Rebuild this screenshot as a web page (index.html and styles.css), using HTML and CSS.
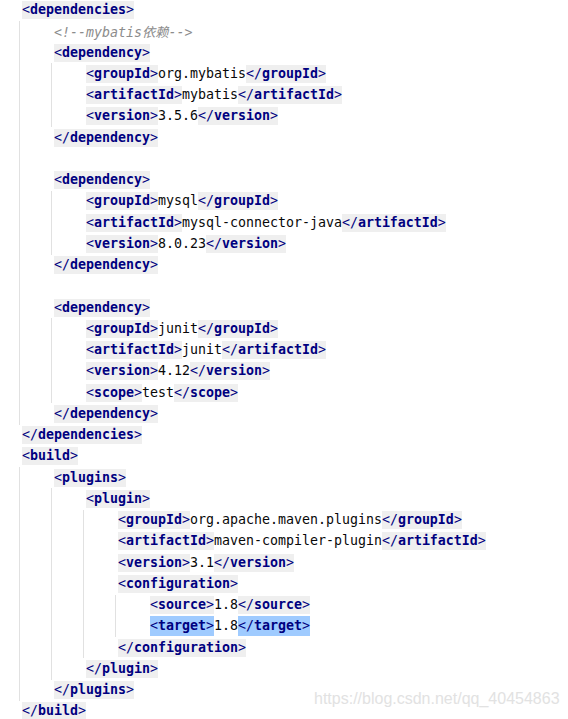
FILE: index.html
```html
<!DOCTYPE html>
<html lang="zh">
<head>
<meta charset="utf-8">
<title>pom.xml</title>
<link rel="stylesheet" href="styles.css">
</head>
<body>
<div class="editor">
  <div class="code">
    <div class="ln"><span class="tag">&lt;<b>dependencies</b>&gt;</span></div>
    <div class="body">
      <div class="ln"><span class="cmt">&lt;!--mybatis依赖--&gt;</span></div>
      <div class="ln"><span class="tag">&lt;<b>dependency</b>&gt;</span></div>
      <div class="body">
        <div class="ln"><span class="tag">&lt;<b>groupId</b>&gt;</span><span class="txt">org.mybatis</span><span class="tag">&lt;/<b>groupId</b>&gt;</span></div>
        <div class="ln"><span class="tag">&lt;<b>artifactId</b>&gt;</span><span class="txt">mybatis</span><span class="tag">&lt;/<b>artifactId</b>&gt;</span></div>
        <div class="ln"><span class="tag">&lt;<b>version</b>&gt;</span><span class="txt">3.5.6</span><span class="tag">&lt;/<b>version</b>&gt;</span></div>
      </div>
      <div class="ln"><span class="tag">&lt;/<b>dependency</b>&gt;</span></div>
      <div class="ln"></div>
      <div class="ln"><span class="tag">&lt;<b>dependency</b>&gt;</span></div>
      <div class="body">
        <div class="ln"><span class="tag">&lt;<b>groupId</b>&gt;</span><span class="txt">mysql</span><span class="tag">&lt;/<b>groupId</b>&gt;</span></div>
        <div class="ln"><span class="tag">&lt;<b>artifactId</b>&gt;</span><span class="txt">mysql-connector-java</span><span class="tag">&lt;/<b>artifactId</b>&gt;</span></div>
        <div class="ln"><span class="tag">&lt;<b>version</b>&gt;</span><span class="txt">8.0.23</span><span class="tag">&lt;/<b>version</b>&gt;</span></div>
      </div>
      <div class="ln"><span class="tag">&lt;/<b>dependency</b>&gt;</span></div>
      <div class="ln"></div>
      <div class="ln"><span class="tag">&lt;<b>dependency</b>&gt;</span></div>
      <div class="body">
        <div class="ln"><span class="tag">&lt;<b>groupId</b>&gt;</span><span class="txt">junit</span><span class="tag">&lt;/<b>groupId</b>&gt;</span></div>
        <div class="ln"><span class="tag">&lt;<b>artifactId</b>&gt;</span><span class="txt">junit</span><span class="tag">&lt;/<b>artifactId</b>&gt;</span></div>
        <div class="ln"><span class="tag">&lt;<b>version</b>&gt;</span><span class="txt">4.12</span><span class="tag">&lt;/<b>version</b>&gt;</span></div>
        <div class="ln"><span class="tag">&lt;<b>scope</b>&gt;</span><span class="txt">test</span><span class="tag">&lt;/<b>scope</b>&gt;</span></div>
      </div>
      <div class="ln"><span class="tag">&lt;/<b>dependency</b>&gt;</span></div>
    </div>
    <div class="ln"><span class="tag">&lt;/<b>dependencies</b>&gt;</span></div>
    <div class="ln"><span class="tag">&lt;<b>build</b>&gt;</span></div>
    <div class="body">
      <div class="ln"><span class="tag">&lt;<b>plugins</b>&gt;</span></div>
      <div class="body">
        <div class="ln"><span class="tag">&lt;<b>plugin</b>&gt;</span></div>
        <div class="body">
          <div class="ln"><span class="tag">&lt;<b>groupId</b>&gt;</span><span class="txt">org.apache.maven.plugins</span><span class="tag">&lt;/<b>groupId</b>&gt;</span></div>
          <div class="ln"><span class="tag">&lt;<b>artifactId</b>&gt;</span><span class="txt">maven-compiler-plugin</span><span class="tag">&lt;/<b>artifactId</b>&gt;</span></div>
          <div class="ln"><span class="tag">&lt;<b>version</b>&gt;</span><span class="txt">3.1</span><span class="tag">&lt;/<b>version</b>&gt;</span></div>
          <div class="ln"><span class="tag">&lt;<b>configuration</b>&gt;</span></div>
          <div class="body">
            <div class="ln"><span class="tag">&lt;<b>source</b>&gt;</span><span class="txt">1.8</span><span class="tag">&lt;/<b>source</b>&gt;</span></div>
            <div class="ln current"><span class="tag match">&lt;<b>target</b>&gt;</span><span class="txt">1.8</span><span class="tag match">&lt;/<b>target</b>&gt;</span></div>
          </div>
          <div class="ln"><span class="tag">&lt;/<b>configuration</b>&gt;</span></div>
        </div>
        <div class="ln"><span class="tag">&lt;/<b>plugin</b>&gt;</span></div>
      </div>
      <div class="ln"><span class="tag">&lt;/<b>plugins</b>&gt;</span></div>
    </div>
    <div class="ln"><span class="tag">&lt;/<b>build</b>&gt;</span></div>
  </div>
  <div class="watermark">https://blog.csdn.net/qq_40454863</div>
</div>
</body>
</html>
```

FILE: styles.css
```css
html, body {
  margin: 0;
  padding: 0;
  background: #ffffff;
  overflow: hidden;
}

.editor {
  width: 568px;
  height: 719px;
  overflow: hidden;
}

.code {
  margin-top: -0.5px;
  padding-left: 22px;
  font-family: "DejaVu Sans Mono", "Noto Sans CJK SC", monospace;
  font-size: 13.29px;
  color: #080808;
}

.body {
  margin-left: -3px;
  border-left: 1px solid #e1e1e1;
  padding-left: 34px;
}

.ln {
  display: flex;
  align-items: center;
  height: 21.25px;
  white-space: pre;
}

.ln.current {
  position: relative;
}

.ln.current::before {
  content: "";
  position: absolute;
  top: 0;
  bottom: 0;
  left: -300px;
  right: -600px;
  background: #fdf9e4;
  z-index: -1;
}

.tag {
  height: 18px;
  line-height: 18px;
  background: #efefef;
  color: #000080;
}

.tag b {
  font-weight: bold;
}

.tag.match {
  height: 20px;
  line-height: 20px;
  background: #9fcbff;
}

.txt {
  line-height: 18px;
}

.cmt {
  color: #8c8c8c;
  font-style: italic;
}

.watermark {
  position: absolute;
  left: 314px;
  top: 691px;
  font-family: "Liberation Sans", Arial, sans-serif;
  font-size: 16px;
  line-height: 16px;
  color: #e2e2e2;
  white-space: nowrap;
}
```
